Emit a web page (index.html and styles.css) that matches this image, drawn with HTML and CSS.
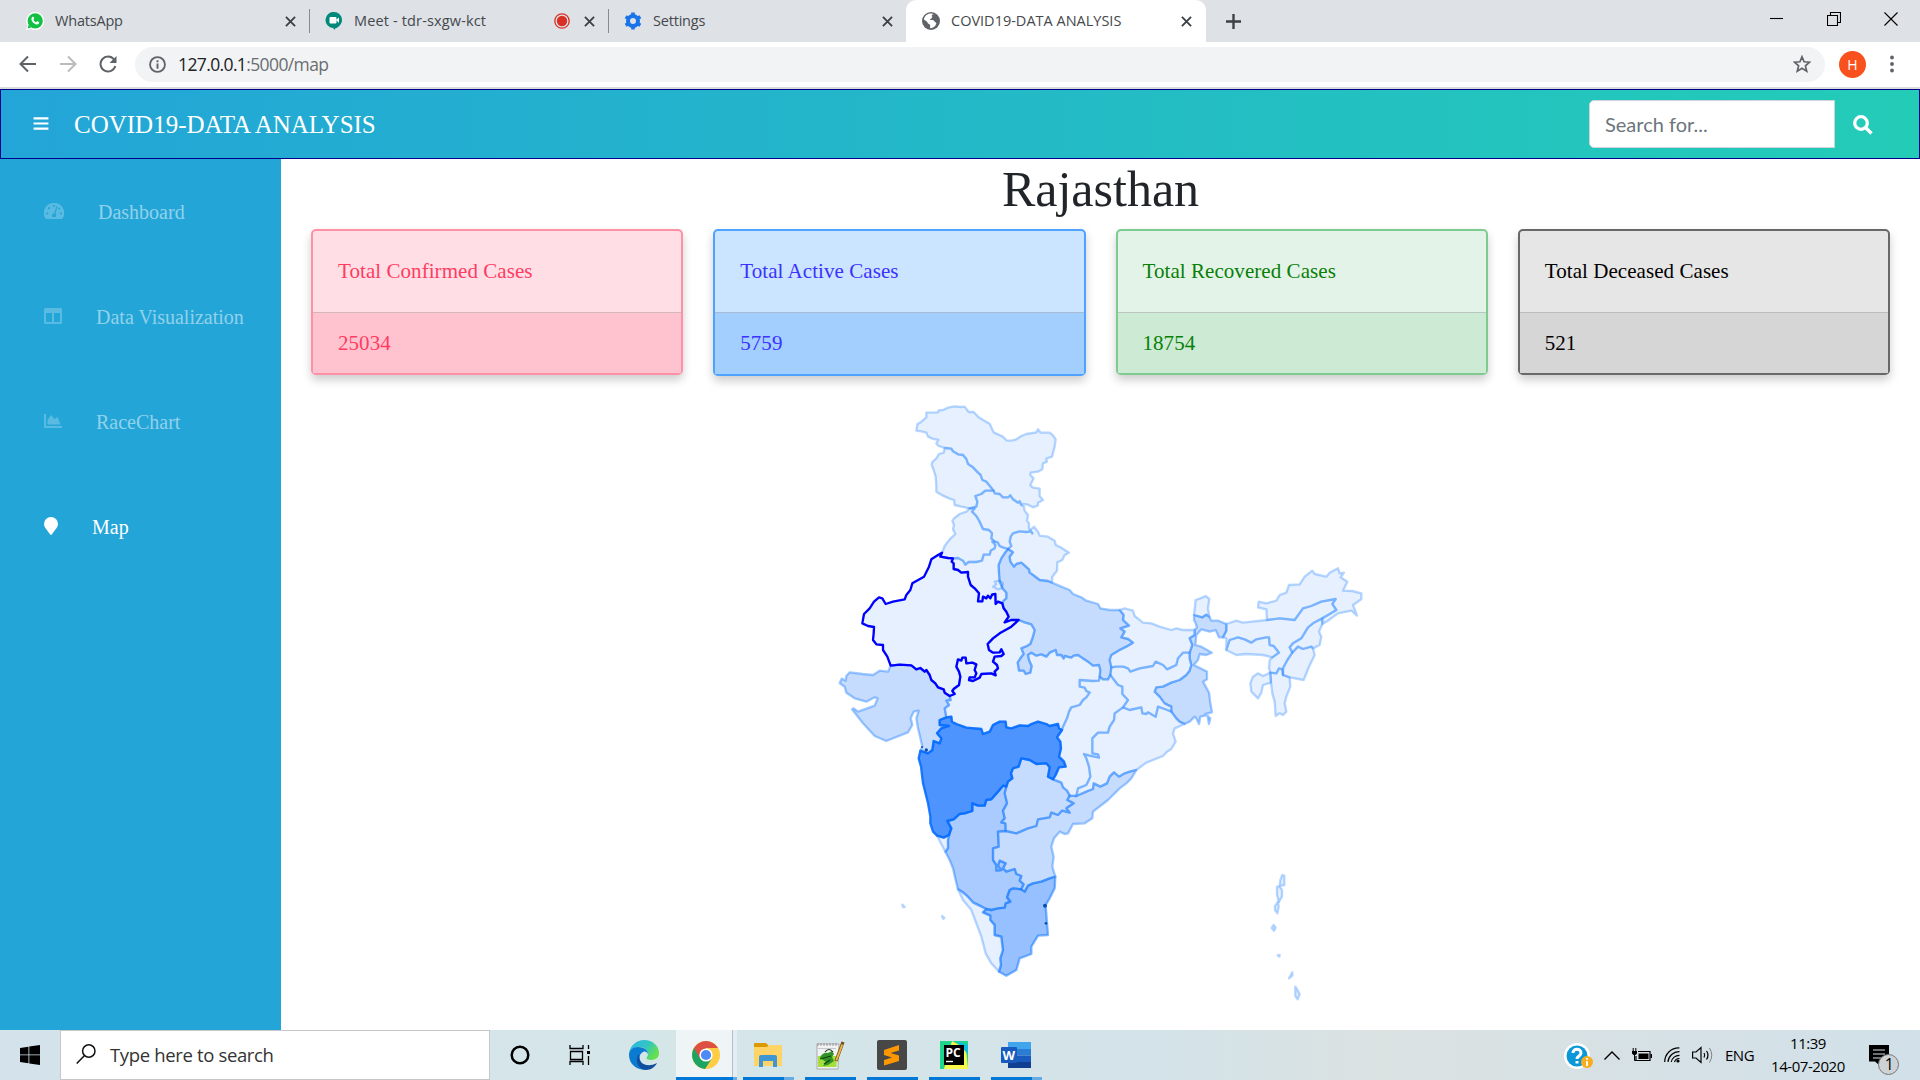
FILE: index.html
```html
<!DOCTYPE html>
<html lang="en">
<head>
<meta charset="utf-8">
<title>COVID19-DATA ANALYSIS</title>
<link rel="stylesheet" href="styles.css">
</head>
<body>
<div class="tabs">
  <div class="tab tab-first">
    <svg class="fav" viewBox="0 0 18 18"><path d="M0 18l1.4-4.6A9 9 0 1 1 5 16.9z" fill="#fff"/><circle cx="9.2" cy="8.9" r="7.6" fill="#12c143"/><path d="M1.6 16.4l1-3.6 2.6 2.8z" fill="#12c143"/><path d="M6.4 4.8c.5-.3 1-.2 1.2.3l.6 1.4-.8 1.2c.7 1.4 1.5 2 2.8 2.6l1-1.1 1.9.9c.4 1.5-1 2.4-2.2 2.3C7.700 12 5.500 9 5.400 7.200c0-1 .4-1.900 1-2.400z" fill="#fff"/></svg>
    <span class="tab-title">WhatsApp</span>
    <svg class="x" viewBox="0 0 12 12"><path d="M1 1l10 10M11 1L1 11"/></svg>
  </div>
  <div class="tab tab-meet">
    <svg class="fav" viewBox="0 0 18 18"><path d="M9 0a8 8 0 0 1 8 8c0 4-3 7-7 8.600V18l-2-2A8 8 0 0 1 9 0z" fill="#00897b"/><rect x="4.500" y="5" width="7" height="6.500" rx="1" fill="#fff"/><path d="M11 8l3-2.500v5.500z" fill="#fff"/></svg>
    <span class="tab-title t-meet">Meet - tdr-sxgw-kct</span>
    <svg class="rec" viewBox="0 0 16 16"><circle cx="8" cy="8" r="7.200" fill="none" stroke="#d93025" stroke-width="1.300"/><circle cx="8" cy="8" r="5.200" fill="#d93025"/></svg>
    <svg class="x" viewBox="0 0 12 12"><path d="M1 1l10 10M11 1L1 11"/></svg>
  </div>
  <div class="tab tab-settings">
    <svg class="fav" viewBox="0 0 18 18"><circle cx="9" cy="9" r="5" fill="none" stroke="#1a73e8" stroke-width="4"/><path d="M9 .5v3M9 14.500v3M1.600 4.700l2.600 1.500M13.800 11.800l2.600 1.500M1.600 13.300l2.600-1.500M13.800 6.200l2.600-1.500" stroke="#1a73e8" stroke-width="3.600"/></svg>
    <span class="tab-title">Settings</span>
    <svg class="x" viewBox="0 0 12 12"><path d="M1 1l10 10M11 1L1 11"/></svg>
  </div>
  <div class="tab tab-active">
    <svg class="fav" viewBox="0 0 18 18"><circle cx="9" cy="9" r="9" fill="#5f6368"/><path d="M8 1.600c3 0 4 .6 4.600 1.400-.6 1.600-2.400 1.200-2.800 2.800-.3 1.200-1.600 1-2 2 1.300.6 3.800-.2 4.400 1.200.6 1.300 2 1.400 2.200 2.200-.7 3-3 4.800-6 5-1-1 .4-2-.4-3.400-.6-1-2.400-1-2.600-2.600C4.200 8.800 2.500 8.300 1.900 7.600 2.200 4.700 5 2 8 1.600z" fill="#fff"/><path d="M9.500 4l3.500 3 3-1-1.500-3L11 2z" fill="#5f6368"/></svg>
    <span class="tab-title t-covid">COVID19-DATA ANALYSIS</span>
    <svg class="x" viewBox="0 0 12 12"><path d="M1 1l10 10M11 1L1 11"/></svg>
  </div>
  <svg class="plus" viewBox="0 0 14 14"><path d="M7 0v14M0 7h14"/></svg>
  <div class="window-buttons">
    <svg viewBox="0 0 14 14"><path d="M0 6.500h13"/></svg>
    <svg viewBox="0 0 14 14"><path d="M.5 3.500h10v10H.5zM3.500 3V.500h10v10H11"/></svg>
    <svg viewBox="0 0 14 14"><path d="M.5 .5l13 13M13.500 .5l-13 13"/></svg>
  </div>
</div>
<div class="toolbar">
  <svg class="nav-icon" viewBox="0 0 18 18"><path d="M17 9H2M9 1.500L1.500 9 9 16.500"/></svg>
  <svg class="nav-icon dim" viewBox="0 0 18 18"><path d="M1 9h15M9 1.500L16.500 9 9 16.500"/></svg>
  <svg class="nav-icon" viewBox="0 0 18 18"><path d="M15 4.500A7.500 7.500 0 1 0 16.300 11"/><path d="M17.500 1v7h-7z" fill="#5f6368" stroke="none"/></svg>
  <div class="address">
    <svg class="info" viewBox="0 0 16 16"><circle cx="8" cy="8" r="7" fill="none" stroke="#5f6368" stroke-width="1.700"/><path d="M8 7v5M8 4v1.800" stroke="#5f6368" stroke-width="1.800"/></svg>
    <span class="url"><b>127.0.0.1</b>:5000/map</span>
    <svg class="star" viewBox="0 0 18 18"><path d="M9 1.800l2.100 5 5.400.4-4.100 3.600 1.300 5.300L9 13.200l-4.700 2.900 1.300-5.300-4.100-3.600 5.400-.4z"/></svg>
  </div>
  <span class="avatar">H</span>
  <svg class="dots" viewBox="0 0 4 18"><circle cx="2" cy="2.500" r="1.900"/><circle cx="2" cy="9" r="1.900"/><circle cx="2" cy="15.500" r="1.900"/></svg>
</div>
<header class="navbar">
  <svg class="burger" viewBox="0 0 16 14"><path d="M0 1.500h16M0 7h16M0 12.500h16"/></svg>
  <span class="brand">COVID19-DATA ANALYSIS</span>
  <div class="search-field">Search for...</div>
  <svg class="search-icon" viewBox="0 0 20 20"><circle cx="8" cy="8" r="6.300"/><path d="M12.500 12.500l6 6"/></svg>
</header>
<div class="page">
  <nav class="sidebar">
    <a class="item i-dash"><svg viewBox="0 0 20 16"><path d="M10 0a10 10 0 0 1 8.700 15.200c-.2.500-.6.800-1.200.8H2.500c-.6 0-1-.3-1.200-.8A10 10 0 0 1 10 0z"/><g fill="#23a5d8"><circle cx="10" cy="3" r="1.100"/><circle cx="5" cy="5.200" r="1.100"/><circle cx="3.200" cy="10.500" r="1.100"/><circle cx="16.800" cy="10.500" r="1.100"/><circle cx="15.300" cy="5.500" r="1.100"/><path d="M12.500 3l1 .4-2 7.400c1 1 .9 2.400.2 3.200H8.300c-1-1.500 0-3.500 2-3.800z"/></g></svg><span>Dashboard</span></a>
    <a class="item i-data"><svg viewBox="0 0 18 16"><path fill-rule="evenodd" d="M1.500 0h15Q18 0 18 1.500v13q0 1.500-1.500 1.500h-15Q0 16 0 14.500v-13Q0 0 1.500 0zM2 5v9h6V5zM10 5v9h6V5z"/></svg><span>Data Visualization</span></a>
    <a class="item i-race"><svg viewBox="0 0 18 14"><path d="M0 0h2v12h16v2H0zM3.500 10.500V6l3.500-5 3.500 4 3-2 3 7.500z"/></svg><span>RaceChart</span></a>
    <a class="item i-map"><svg viewBox="0 0 14 18"><path d="M7 0a7 7 0 0 1 7 7c0 3-2 4.500-6.200 10.600q-.8.800-1.600 0C2 11.500 0 10 0 7a7 7 0 0 1 7-7z"/></svg><span>Map</span></a>
  </nav>
  <main>
    <h1>Rajasthan</h1>
    <div class="cards">
      <div class="card red"><div class="card-head">Total Confirmed Cases</div><div class="card-foot">25034</div></div>
      <div class="card blue"><div class="card-head">Total Active Cases</div><div class="card-foot">5759</div></div>
      <div class="card green"><div class="card-head">Total Recovered Cases</div><div class="card-foot">18754</div></div>
      <div class="card gray"><div class="card-head">Total Deceased Cases</div><div class="card-foot">521</div></div>
    </div>
    <svg class="map" id="map" viewBox="43 0 1602 1890"></svg>
  </main>
</div>
<footer class="taskbar">
  <svg class="start" viewBox="0 0 20 20"><path d="M0 3l8.500-1.300v7.800H0zM9.300 1.500L20 0v9.500H9.300zM0 10.300h8.500v7.900L0 17zM9.300 10.300H20V20L9.300 18.400z"/></svg>
  <div class="win-search">
    <svg viewBox="0 0 20 20"><circle cx="12.800" cy="7" r="6.200"/><path d="M8.300 11.800L.7 19.500"/></svg>
    <span>Type here to search</span>
  </div>
  <div class="slot s-cortana"><svg width="20" height="20" viewBox="0 0 20 20"><circle cx="10" cy="10" r="8.300" fill="none" stroke="#000" stroke-width="2.500"/></svg></div>
  <div class="slot s-task"><svg width="22" height="20" viewBox="0 0 22 20"><path d="M1 0v3.500h13V0M1.500 6.500h12v8h-12zM1 20v-3.500h13V20M19.500 0v4M19.500 11v9" fill="none" stroke="#000" stroke-width="1.300"/><path d="M18 6h3v3h-3z"/></svg></div>
  <div class="slot s-edge"><svg width="30" height="30" viewBox="0 0 30 30"><defs><linearGradient id="eg" x1="0" y1="0" x2="1" y2=".5"><stop offset="0" stop-color="#2fb4e8"/><stop offset=".6" stop-color="#32c6c2"/><stop offset="1" stop-color="#66e04c"/></linearGradient></defs><path d="M0 14C1 5 8 0 15 0c9 0 15 6 15 13 0 5-4 7-8 7-3 0-4.500-1-4.500-2 0-1 1.500-1.500 1.500-4C19 10 15 7 11 7 5 7 1 10 0 14z" fill="url(#eg)"/><path d="M0 15c0-5 4-8 9-8 6 0 10 3 10 7-1-2-3-3-5-2-4 2-5 8 0 13 2 2 4 3 7 3-9 5-21-2-21-13z" fill="#0b7ad1"/><path d="M10 16c0 8 8 12 18 7-3 6-9 8-14 6.500C8 27 6 19 10 14z" fill="#104f9e"/></svg></div>
  <div class="slot s-chrome"><svg width="28" height="28" viewBox="0 0 28 28"><circle cx="14" cy="14" r="14" fill="#ffcd45"/><path d="M14 14L1.900 7A14 14 0 0 0 13 28l6.500-10z" fill="#1da462"/><path d="M14 14l-6 3.500L1.900 7a14 14 0 0 1 24.200 0H14z" fill="#dd5144"/><circle cx="14" cy="14" r="6.600" fill="#fff"/><circle cx="14" cy="14" r="5.100" fill="#4c8bf5"/></svg></div>
  <div class="slot run tail s-folder"><svg width="28" height="24" viewBox="0 0 28 24"><path d="M0 1q0-1 1-1h11l2 2v4H0z" fill="#dc9a00"/><path d="M0 4h13l2-2h12q1 0 1 1v20H0z" fill="#ffd467"/><path d="M5 24V14q0-2 2-2h14q2 0 2 2v10h-4v-6H9v6z" fill="#3f96d4"/></svg></div>
  <div class="slot run"><svg width="30" height="30" viewBox="0 0 30 30"><path d="M2 4h22l-1 25H2z" fill="#f2f2f2" stroke="#999" stroke-width=".8"/><path d="M3 3v3M6 3v3M9 3v3M12 3v3M15 3v3M18 3v3M21 3v3" stroke="#888" stroke-width=".8"/><path d="M3 8.500h18" stroke="#aab" stroke-width=".6"/><path d="M3 16h19l-.5 11H3z" fill="#a4df3c"/><path d="M5 18c1-4 5-6 8-5l4-2 2 3-2 3 2 4-6 4-5 1 3-4z" fill="#329326"/><path d="M5 19l11-3M9 24l6-4M10 12q4-5 8 0" stroke="#173f12" stroke-width="1.200" fill="none"/><path d="M21 21l7-19" stroke="#744819" stroke-width="3.200"/><path d="M21.300 20.500l6-16" stroke="#e6b542" stroke-width="2"/></svg></div>
  <div class="slot run"><svg width="30" height="30" viewBox="0 0 30 30"><rect width="30" height="30" rx="2" fill="#474747"/><path d="M7 10l15-5v5.500L13.500 13l8.500 2.500V21L7 25.500V20l8-2.500L7 15z" fill="#ff9800"/></svg></div>
  <div class="slot run"><svg width="28" height="28" viewBox="0 0 28 28"><path d="M0 0h28v28H0z" fill="#1fd68c"/><path d="M12 0l14 8 2 20H4z" fill="#fcf84a"/><path d="M17 0l11 4v10l-6-8z" fill="#11bfdf"/><rect x="4" y="4" width="20" height="20"/><path d="M6 20.500h7" stroke="#fff" stroke-width="1.400"/><text class="pc" x="5.500" y="15.500">PC</text></svg></div>
  <div class="slot run tail"><svg width="30" height="28" viewBox="0 0 30 28"><path d="M7 1h23v7H7z" fill="#41a5ee"/><path d="M7 8h23v6.500H7z" fill="#2b7cd3"/><path d="M7 14.500h23V21H7z" fill="#185abd"/><path d="M7 21h23v6H7z" fill="#103f91"/><rect y="6" width="16" height="16" rx="1" fill="#185abd"/><text class="wd" x="1.500" y="18.500">W</text></svg></div>
  <div class="tray">
    <svg class="help" viewBox="0 0 30 28"><circle cx="13" cy="13" r="13" fill="#fff"/><circle cx="13" cy="13" r="10.500" fill="#0a98d8"/><path d="M9 10c0-5 8-5 8 0 0 3-4 3-4 6M13 18v2.500" stroke="#fff" stroke-width="3" fill="none"/><circle cx="23" cy="19" r="6" fill="#f8ad1f"/><path d="M23 18v5M23 15v1.700" stroke="#fff" stroke-width="1.800"/></svg>
    <svg class="caret" viewBox="0 0 16 9"><path d="M.5 8.500L8 1l7.500 7.500" fill="none" stroke="#000" stroke-width="1.400"/></svg>
    <svg class="battery" viewBox="0 0 20 14"><path d="M6 3.500h12v9H4V8" fill="none" stroke="#000" stroke-width="1.200"/><path d="M6.500 5.500h10v5.500h-10zM18.500 6H20v4h-1.500zM0 3h5v2.500L3.500 7h-2L0 5.500z"/><path d="M1.200 0v3M3.800 0v3M2.500 7v5.500H4" stroke="#000" fill="none"/></svg>
    <svg class="wifi" viewBox="0 0 16 16"><path d="M.7 15A14 14 0 0 1 15.500 1M4 15A11 11 0 0 1 15.500 4.700M7.300 15A8 8 0 0 1 15.500 8.300M10.500 15a5 5 0 0 1 5-3.500" fill="none" stroke="#000" stroke-width="1.200"/><circle cx="14" cy="14" r="1.600"/></svg>
    <svg class="volume" viewBox="0 0 21 18"><path d="M.6 6H4l5-4.500v15L4 12H.6zM12 7q1.500 2 0 4.500M14.500 5q3 4 0 8.500" fill="none" stroke="#000" stroke-width="1.200"/><path d="M17.500 2q4.500 7 0 14.500" fill="none" stroke="#7d8588"/></svg>
    <span class="lang">ENG</span>
    <div class="clock"><span>11:39</span><span class="date">14-07-2020</span></div>
    <svg class="action" viewBox="0 0 32 32"><path d="M0 0h20v16.500H10.500v4L6 16.500H0z"/><path d="M4 5h12M4 9h12M4 13h8" stroke="#d3e1e9" stroke-width="1.200"/><circle cx="19.500" cy="19.500" r="10" fill="#ced2d4" stroke="#777"/><text x="15.700" y="25">1</text></svg>
  </div>
</footer>
<script src="map.js"></script>
</body>
</html>
```
FILE: styles.css
```css
* { box-sizing: border-box; }
body { margin: 0; width: 1920px; height: 1080px; overflow: hidden; background: #fff; font-family: "Liberation Serif", "Times New Roman", serif; }
svg { flex: none; display: block; }

.tabs { display: flex; align-items: center; height: 42px; background: #dee1e6; font-family: "Open Sans", sans-serif; }
.tab { display: flex; align-items: center; height: 42px; padding: 0 14px 0 16px; color: #45494d; }
.tab-first { width: 310px; padding-left: 26px; }
.tab-meet { width: 299px; padding-left: 15px; }
.tab-settings { width: 297px; padding: 0 13px 0 15px; }
.tab-active { width: 300px; padding-left: 16px; background: #fff; border-radius: 10px 10px 0 0; }
.tab-first, .tab-meet { background: linear-gradient(#888c91, #888c91) right center / 1px 24px no-repeat; }
.fav { width: 18px; height: 18px; margin-right: 11px; }
.tab-title { flex: 1; margin-top: -2px; font-size: 14.5px; letter-spacing: -0.2px; white-space: nowrap; }
.t-meet { letter-spacing: 0.15px; }
.t-covid { letter-spacing: 0; }
.x { width: 11px; height: 11px; fill: none; stroke: #3c4043; stroke-width: 2; }
.rec { width: 16px; height: 16px; margin-right: 14px; }
.plus { width: 15px; height: 15px; margin-left: 20px; stroke: #3c4043; stroke-width: 2.2; }
.window-buttons { display: flex; gap: 43px; margin: -5px 22px 0 auto; }
.window-buttons svg { width: 14px; height: 14px; fill: none; stroke: #000; stroke-width: 1.1; }

.toolbar { display: flex; align-items: center; height: 47px; padding: 0 26px 1px 19px; border-bottom: 2px solid #dadbdd; background: #fff; }
.nav-icon { width: 18px; height: 18px; margin-right: 22px; fill: none; stroke: #5f6368; stroke-width: 2; }
.nav-icon.dim { stroke: #babcbe; }
.address { display: flex; align-items: center; width: 1690px; height: 35px; margin-left: -4px; padding: 0 14px; border-radius: 18px; background: #f1f3f4; font-family: "Open Sans", sans-serif; }
.info { width: 17px; height: 17px; margin-right: 12px; }
.url { flex: 1; font-size: 17.5px; letter-spacing: -0.62px; color: #6a6e72; }
.url b { font-weight: 400; color: #202124; }
.star { width: 18px; height: 18px; fill: none; stroke: #5f6368; stroke-width: 1.7; }
.avatar { width: 27px; height: 27px; margin-left: 14px; border-radius: 50%; background: #f9511d; color: #fff; font: 14px/27px "Open Sans", sans-serif; text-align: center; }
.dots { width: 4px; height: 18px; margin-left: auto; fill: #5f6368; }

.navbar { display: flex; align-items: center; height: 70px; padding: 0 46px 0 32px; border: 1px solid #00008b; background: linear-gradient(90deg, #23a5d8, #23ccb7); color: #fff; }
.burger { width: 16px; height: 13px; margin: -1px 25px 0 0; stroke: #fff; stroke-width: 2.4; }
.brand { margin-top: 2px; font-size: 25px; line-height: 30px; }
.search-field { width: 246px; height: 48px; margin-left: auto; padding: 0 15px; border: 1px solid #ced4da; border-radius: 5px 0 0 5px; background: #fff; color: #6c757d; font: 20px/46px Lato, sans-serif; }
.search-icon { width: 20px; height: 20px; margin: 2px 0 0 18px; fill: none; stroke: #fff; stroke-width: 3.3; }

.page { display: flex; height: 871px; }
.sidebar { width: 281px; background: #23a5d8; }
.item { display: flex; align-items: center; height: 105px; padding-left: 44px; color: rgba(255,255,255,.5); font-size: 20px; }
.item svg { fill: rgba(255,255,255,.25); margin-top: -2px; }
.item span { margin-top: 2px; }
.i-dash svg { width: 20px; height: 16px; margin-right: 34px; }
.i-data svg { width: 18px; height: 16px; margin-right: 34px; }
.i-race svg { width: 18px; height: 14px; margin-right: 34px; }
.i-map svg { width: 14px; height: 18px; margin-right: 34px; fill: #fff; }
.i-map { color: #fff; }
main { flex: 1; display: flex; flex-direction: column; align-items: center; }
h1 { margin: 0 0 10px; color: #212529; font-size: 50px; font-weight: 400; line-height: 60px; }
.cards { display: flex; gap: 30px; width: 1579px; height: 146px; }
.card { flex: 1; border: 2px solid; border-radius: 5px; font-size: 21px; letter-spacing: .06px; box-shadow: 0 5px 10px rgba(0,0,0,.2); }
.card-head { height: 82px; padding: 0 25px; line-height: 80px; border-bottom: 1px solid rgba(0,0,0,.18); }
.card-foot { height: 60px; padding: 0 25px; line-height: 60px; }
.red { border-color: #ff91a6; background: #ffdfe5; color: #ff3b62; }
.red .card-foot { background: #ffc3cf; }
.blue { border-color: #4da3ff; background: #cbe4ff; color: #3b32ff; height: 147px; }
.blue .card-foot { background: #a3cfff; height: 61px; }
.green { border-color: #7ecb90; background: #e4f3e8; color: #078007; }
.green .card-foot { background: #cdead4; }
.gray { border-color: #68686a; background: #e6e6e6; color: #000; }
.gray .card-foot { background: #d6d6d6; }
.map { width: 534px; height: 630px; margin-top: 15px; }
.border { fill: none; stroke-width: 7; stroke-linejoin: round; }
.fill.f1, .fill.selected { fill: #e6f0ff; }
.fill.f2 { fill: #c6dcff; }
.fill.f3 { fill: #a9cbff; }
.fill.f4 { fill: #96c0ff; }
.fill.f5 { fill: #4d94ff; }
.border.f1 { stroke: rgba(0,110,255,.28); }
.border.f2 { stroke: rgba(0,110,255,.36); }
.border.f3 { stroke: rgba(0,110,255,.4); }
.border.f4 { stroke: rgba(0,110,255,.48); }
.border.f5 { stroke: rgba(0,105,255,.85); }
.border.selected { stroke: #00f; }
.port { fill: #0a4db0; }

.taskbar { display: flex; height: 50px; background: linear-gradient(90deg, #d4e3eb, #d5e6e9 35%, #d3e3e9 60%, #dbe2e2 72%, #d1e0e9); }
.start { width: 20px; height: 20px; margin: 15px 20px; }
.win-search { display: flex; align-items: center; gap: 14px; width: 430px; height: 50px; padding: 0 0 2px 15px; border: 1px solid #c5c8c9; background: #fff; color: #333; font: 18.5px "Open Sans", sans-serif; letter-spacing: -.35px; }
.win-search svg { width: 20px; height: 20px; fill: none; stroke: #111; stroke-width: 1.5; }
.slot { display: flex; align-items: center; justify-content: center; width: 51px; height: 50px; margin-right: 11px; padding-right: 2px; }
.s-cortana { width: 60px; margin: 0; padding: 0; }
.s-task { width: 60px; margin: 0; padding: 0; }
.s-edge { width: 66px; padding: 0 0 0 2px; margin: 0; }
.s-chrome { width: 61px; margin-right: 6px; padding-right: 2px; background: linear-gradient(90deg, #0078d7 93%, #66abe3 93%) bottom / 100% 3px no-repeat, linear-gradient(90deg, #eff4f7 92%, #afc2cb 92%, #afc2cb 94%, #e4edf1 94%); }
.run { background: linear-gradient(#0078d7, #0078d7) bottom / 100% 3px no-repeat; }
.run.tail { background-image: linear-gradient(90deg, #0078d7 80%, #66abe3 80%); }
.pc { fill: #fff; font: bold 12px "Open Sans", sans-serif; }
.wd { fill: #fff; font: bold 13px "Open Sans", sans-serif; }
.tray { display: flex; align-items: center; margin-left: auto; padding-right: 12px; height: 50px; width: 356px; font-family: "Open Sans", sans-serif; }
.tray svg { margin-right: 12px; }
.tray .help { width: 30px; height: 28px; margin-top: 3px; }
.tray .caret { width: 16px; height: 9px; margin-left: -2px; }
.battery { width: 20px; height: 14px; }
.wifi { width: 16px; height: 16px; }
.volume { width: 21px; height: 18px; }
.lang { font-size: 15px; letter-spacing: -.5px; width: 30px; }
.clock { display: flex; flex-direction: column; width: 90px; margin: -1px 0 0 8px; text-align: center; font-size: 15px; line-height: 23px; letter-spacing: -.45px; }
.date { white-space: nowrap; }
.tray .action { width: 32px; height: 32px; margin: 12px 0 0 16px; }
.action text { font: 16px "Open Sans", sans-serif; }
```
FILE: map.js
```js
// Borders of the states; neighbours share the same line.
const borders = {
ladOut: "375,174 355,167 350,160 356,150 338,146 325,140 320,128 305,124 290,122 293,103 305,95 320,82 320,68 355,67 357,61 370,60 385,53 405,49 425,51 435,50 447,66 462,66 475,80 490,90 510,101 522,127 535,133 550,140 560,151 575,152 590,148 605,138 620,132 650,127 655,118 663,128 690,128 700,136 708,148 705,170 697,200 680,206 682,215 670,220 668,238 655,245 633,248 632,255 642,265 632,285 638,292 660,296 660,318 670,330 655,338 655,346 640,352 625,344 610,342 605,345",
ladJk: "375,174 395,176 400,184 415,193 430,195 440,207 445,222 460,232 475,248 483,255 488,270 500,275 510,287 522,302",
ladHp: "522,302 525,310 540,312 550,322 565,322 572,316 580,328 595,338 600,334 605,345",
jkOut: "375,174 372,188 358,192 350,205 338,216 336,225 342,240 348,260 350,290 350,305 370,317 390,326 403,330 405,345 425,350 450,355",
jkHp: "450,355 470,350 473,335 467,318 485,312 497,302 522,302",
hpOut: "605,345 613,350 615,362 625,375 622,392 628,400 628,415 638,430",
hpUk: "638,430 634,424 620,426 600,424 580,430 573,440 570,455 575,468 565,477",
hpHar: "565,477 550,472 540,468 534,457 525,455",
hpPun: "525,455 515,445 517,430 508,420 490,417 480,395 470,378 457,365 465,355 450,355",
punOut: "450,355 440,365 420,372 403,385 398,393 403,405 400,418 407,432 390,448 375,468 367,488",
punRaj: "367,488 362,500 385,504 400,505",
punHar: "400,505 415,504 430,512 437,524 447,516 470,516 487,512 492,494 510,494 513,482 525,475 527,465 518,455 525,455",
rajHar: "400,505 396,515 402,520 402,537 415,540 425,548 445,546 445,560 453,585 465,595 478,610 475,634 488,634 490,620 500,625 505,617 512,625 518,613 527,612 528,642 535,635 548,640",
harUp: "548,640 552,632 560,625 560,608 550,597 540,575 538,550 537,525 545,505 555,490 565,477",
rajUp: "548,640 552,655 560,665 567,680 555,697 575,690 597,690",
rajMp: "597,690 575,710 540,730 520,745 504,762 508,780 520,788 540,787 545,778 552,792 545,798 525,800 520,815 532,825 535,835 525,845 528,856 515,850 485,852 480,863 460,873 448,870 450,862 465,862 470,850 465,840 470,823 458,818 440,820 438,803 428,803 425,812 415,808 410,830 418,845 422,860 418,885 402,897 398,903 405,912 390,918",
rajGuj: "390,918 375,908 372,898 355,892 347,880 335,870 330,855 320,840 315,845 302,834 290,838 275,826 240,824 213,827",
rajOut: "213,827 203,800 190,780 190,765 170,763 160,750 162,730 163,711 145,708 128,700 133,672 150,655 163,635 178,622 188,625 198,642 220,635 255,628 260,615 272,600 278,580 313,560 328,530 335,508 355,495 367,488",
ukOut: "638,430 632,420 643,410 655,425 660,437 685,440 705,452 708,465 725,473 748,488 735,495 728,510 713,517 712,542 698,560 697,578",
ukUp: "697,578 685,573 660,570 640,555 630,548 628,538 605,518 590,522 583,530 572,515 570,500 580,487 565,477",
upOut: "697,578 725,590 750,600 760,612 785,622 800,632 835,642 842,655 870,660 900,660",
upBih: "900,660 912,675 910,690 928,707 902,715 915,725 905,742 925,747 940,758 920,770 900,780 875,795 870,810 875,832",
upJh: "875,832 872,855",
upCg: "872,855 865,868 850,868 840,860",
upMp: "840,860 842,840 838,825 820,827 805,815 785,802 775,795 762,797 755,803 735,798 732,806 725,795 712,795 708,780 690,788 680,800 665,793 650,797 635,788 625,795 628,810 636,828 632,848 618,852 612,842 598,842 594,818 602,805 612,792 605,775 622,768 632,762 640,740 645,720 635,703 615,697 597,690",
mpCg: "840,860 838,872 820,873 780,870 780,890 795,893 800,903 810,908 800,922 790,930 780,945 755,952 748,965 742,985 730,1010 727,1020",
mpMh: "727,1020 718,1015 715,1002 690,1008 680,1002 655,995 635,1002 625,1008 600,1006 575,1015 560,1012 558,995 540,995 520,1005 510,1025 490,1032 485,1017 440,1013 410,1002 397,995 395,980 380,982",
mpGuj: "380,982 375,955 388,945 380,932 393,930 390,918",
gujMh: "380,982 360,990 360,1005 388,1008 365,1015 352,1030 365,1045 360,1060 342,1053 338,1080 325,1090 302,1082",
gujOut: "302,1082 308,1070 300,1035 295,1015 290,985 297,962 282,965 273,985 278,1005 265,1027 200,1053 165,1038 130,1000 97,958 102,955 115,965 165,947 174,925 165,922 140,935 105,925 80,908 75,890 60,880 66,866 78,872 80,858 90,847 130,852 160,855 180,842 205,845 213,827",
mhOut: "302,1082 297,1105 304,1130 310,1180 325,1240 332,1280 332,1300 340,1325 352,1337",
mhGoa: "352,1337 372,1343 388,1335",
mhKar: "388,1335 395,1315 383,1293 402,1288 420,1272 435,1270 458,1263 458,1240 475,1247 495,1247 500,1230 515,1228 535,1205 550,1187 560,1190",
mhTel: "560,1190 565,1175 578,1165 574,1150 580,1135 597,1130 605,1105 630,1110 650,1122 680,1120 690,1132 685,1160 700,1168",
mhCg: "700,1168 708,1155 718,1132 738,1130 733,1115 718,1100 724,1075 722,1055 712,1042 727,1020",
goaOut: "352,1337 377,1385",
goaKar: "377,1385 385,1375 385,1350 388,1335",
karOut: "377,1385 390,1410 400,1435 408,1470 415,1498",
karKer: "415,1498 430,1507 445,1520 460,1537 480,1547 500,1557",
karTn: "500,1557 515,1560 535,1555 555,1553 558,1540 572,1535 562,1522 570,1500 580,1495 605,1498",
karAp: "605,1498 612,1483 600,1472 605,1458 590,1452 585,1437 560,1445 550,1435 558,1420 540,1412 535,1428 545,1440 530,1442 530,1425 520,1410 520,1375 537,1370 535,1325 558,1323",
karTel: "558,1323 557,1300 545,1297 555,1285 550,1262 562,1240 555,1210 560,1190",
telAp: "558,1323 590,1330 625,1315 650,1308 655,1288 690,1282 695,1268 715,1275 727,1262 750,1268 740,1255 762,1240 743,1230 750,1217",
telCg: "700,1168 725,1178 730,1192 742,1202 750,1217",
apCg: "750,1217 770,1218",
cgOd: "770,1218 775,1195 800,1185 812,1160 808,1130 800,1105 793,1092 810,1097 838,1103 835,1093 818,1090 818,1045 835,1028 865,1028 870,1010 883,990 885,970 910,952",
cgJh: "910,952 925,930 908,912 908,890 895,885 872,855",
apOd: "770,1218 800,1205 820,1197 822,1180 842,1190 862,1180 870,1160 883,1147 898,1160 915,1150 930,1145 950,1140",
odOut: "950,1140 980,1118 1030,1098 1042,1085 1055,1077 1068,1055 1060,1030 1065,1015 1095,1002",
odJh: "910,952 930,960 965,952 968,970 980,972 985,967 1008,980 1015,950 1035,957 1055,965",
odWb: "1055,965 1070,985 1080,995 1095,1002",
jhWb: "1055,965 1055,950 1035,940 1020,920 1005,905 1010,892 1030,890 1055,878 1080,870 1100,855 1110,842 1115,825 1110,805 1110,788",
jhBih: "1110,788 1090,788 1075,805 1070,825 1042,838 1030,825 1008,815 1000,828 960,835 932,845 925,835 910,830 890,830 875,832",
bihWb: "1110,788 1118,765 1110,745 1125,735 1125,720",
bihOut: "900,660 915,655 940,662 945,678 970,698 995,700 1020,710 1055,720 1070,715 1090,720 1125,720",
wbNep: "1125,720 1132,712 1128,700 1123,690 1123,675",
sikOut: "1123,675 1128,630 1142,625 1158,618 1169,627 1165,655 1169,680",
sikWb: "1169,680 1160,674 1148,682 1123,675",
wbBhu: "1169,680 1175,692 1195,692 1220,702",
wbAs: "1220,702 1220,722 1210,742",
wbOut: "1210,742 1198,742 1188,720 1170,725 1145,718 1130,735 1127,765 1145,770 1177,788 1160,795 1140,792 1135,810 1122,825 1162,845 1162,868 1150,875 1168,908 1172,940 1177,967 1157,972 1172,985 1168,1002 1163,975 1142,980 1138,1002 1130,985 1125,980 1110,995 1095,1002",
asBhu: "1220,702 1250,692 1270,698 1342,690",
arOut: "1342,690 1340,658 1315,652 1317,635 1340,640 1370,632 1380,615 1400,608 1408,585 1440,583 1455,560 1478,542 1485,552 1520,560 1530,548 1555,535 1560,550 1573,548 1563,562 1583,575 1570,602 1598,603 1625,610 1625,628 1600,645 1612,677 1595,662 1555,670 1525,692 1508,702",
arAs: "1342,690 1380,685 1425,690 1450,655 1475,648 1505,635 1548,627 1538,642 1550,660 1525,675 1508,685",
arNag: "1508,685 1508,702",
asNag: "1508,685 1480,700 1465,712 1445,745 1420,760 1410,772 1418,788",
nagOut: "1508,702 1498,725 1505,740 1500,765 1480,775",
nagMan: "1418,788 1435,770 1450,777 1475,770 1480,775",
asMan: "1418,788 1403,810 1390,835 1390,855",
manOut: "1480,775 1485,795 1468,830 1452,870 1410,862",
manMiz: "1410,862 1390,855",
asMiz: "1390,855 1388,838 1378,835 1370,850 1352,848",
mizOut: "1410,862 1412,890 1400,920 1395,940 1400,965 1390,975 1380,970 1368,978 1365,935 1358,910 1354,878",
mizTri: "1354,878 1352,848",
triOut: "1352,848 1330,858 1315,850 1300,860 1292,880 1295,905 1315,925 1325,908 1330,885 1354,878",
asBan: "1352,848 1348,835 1350,810 1358,802",
megOut: "1358,802 1330,795 1280,792 1250,795 1220,780",
megAs: "1220,780 1225,765 1230,750 1255,742 1275,748 1295,758 1310,748 1340,742 1348,742 1350,765 1362,768 1378,788 1358,802",
asBan2: "1210,742 1220,745 1220,780",
apOut: "950,1140 935,1165 920,1180 900,1195 865,1230 820,1265 818,1285 795,1300 760,1302 745,1330 735,1332 720,1325 703,1345 695,1370 702,1400 698,1430 707,1460",
tnAp: "707,1460 690,1465 665,1475 640,1480 625,1487 615,1505 605,1498",
tnOut: "707,1460 705,1495 690,1525 678,1545 682,1600 685,1635 655,1637 635,1670 635,1692 600,1705 590,1740 560,1757 538,1745",
tnKer: "538,1745 544,1725 542,1705 550,1680 545,1640 525,1635 525,1605 512,1590 512,1577 490,1567 500,1557",
kerOut: "415,1498 430,1530 455,1560 470,1600 485,1640 498,1690 515,1720 538,1745",
delhi: "550,580 540,572 525,575 530,583 520,590 535,598 545,595",
andaman1: "1388,1455 1394,1457 1394,1485 1380,1487 1382,1470",
andaman2: "1380,1490 1387,1500 1387,1520 1378,1535 1372,1515 1372,1490",
andaman3: "1375,1535 1377,1550 1373,1570 1367,1562 1365,1550",
andaman4: "1362,1605 1368,1613 1363,1622 1356,1614",
andaman5: "1374,1696 1380,1695 1379,1700",
andaman6: "1418,1747 1418,1757 1408,1765",
andaman7: "1427,1790 1432,1798 1440,1812 1434,1828 1427,1818",
lak1: "248,1544 255,1551 250,1551",
lak2: "367,1578 374,1584 371,1586"
};
const states = [
["f1","ladOut ladHp ladJk"],
["f1","jkOut jkHp ladJk"],
["f1","ladHp hpOut hpUk hpHar hpPun jkHp"],
["f1","punOut punRaj punHar hpPun"],
["f1","punHar hpHar harUp rajHar"],
["f1","ukOut ukUp hpUk"],
["f1","rajMp mpGuj mpMh mpCg upMp"],
["f1","bihOut bihWb jhBih upBih"],
["f1","jhBih upJh cgJh odJh jhWb"],
["f1","mpCg mhCg telCg apCg cgOd cgJh upCg"],
["f1","cgOd odJh odWb odOut apOd"],
["f1","sikOut sikWb"],
["f1","asBhu arAs asNag asMan asMiz asBan megAs asBan2 wbAs"],
["f1","arOut arNag arAs"],
["f1","arNag nagOut nagMan asNag"],
["f1","nagMan manOut manMiz asMan"],
["f1","manMiz asMiz mizTri mizOut"],
["f1","triOut mizTri"],
["f1","megOut megAs"],
["f1","kerOut tnKer karKer"],
["f1","goaOut goaKar mhGoa"],
["f1","delhi"],["f1","andaman1"],["f1","andaman2"],["f1","andaman3"],["f1","andaman4"],["f1","andaman5"],["f1","andaman6"],["f1","andaman7"],["f1","lak1"],["f1","lak2"],
["f2","upOut upBih upJh upCg upMp rajUp harUp ukUp"],
["f2","gujOut rajGuj mpGuj gujMh"],
["f2","wbNep sikWb wbBhu wbAs wbOut odWb jhWb bihWb"],
["f2","telAp telCg mhTel karTel"],
["f2","apOut tnAp karAp telAp apCg apOd"],
["f3","karOut karKer karTn karAp karTel mhKar goaKar"],
["f4","tnOut tnKer karTn tnAp"],
["f5","mhOut mhGoa mhKar mhTel mhCg mpMh gujMh"],
["selected","punRaj rajHar rajUp rajMp rajGuj rajOut"]
];
const points = {};
for (const k in borders) points[k] = borders[k].split(" ").map(p => p.split(",").map(Number));
const gap = (a, b) => Math.hypot(a[0] - b[0], a[1] - b[1]);
const map = document.getElementById("map");
const add = (tag, attrs) => {
  const el = document.createElementNS("http://www.w3.org/2000/svg", tag);
  for (const k in attrs) el.setAttribute(k, attrs[k]);
  map.appendChild(el);
};
// Joins the borders of one state, turning each so that it starts where the last one ended.
function outline(names) {
  const parts = names.split(" ").map(n => points[n]);
  let line = parts.shift().slice();
  if (parts.length) {
    const near = p => Math.min(...parts.map(q => Math.min(gap(p, q[0]), gap(p, q[q.length - 1]))));
    if (near(line[line.length - 1]) > near(line[0])) line.reverse();
  }
  while (parts.length) {
    const end = line[line.length - 1];
    const dist = q => Math.min(gap(end, q[0]), gap(end, q[q.length - 1]));
    parts.sort((a, b) => dist(a) - dist(b));
    let next = parts.shift().slice();
    if (gap(end, next[0]) > gap(end, next[next.length - 1])) next.reverse();
    line = line.concat(next.slice(1));
  }
  return "M" + line.map(p => p.join(" ")).join("L") + "Z";
}
// All fills go below all borders, so a shared border shows twice as strong.
for (const layer of ["fill", "border"])
  for (const [cls, names] of states) add("path", { class: layer + " " + cls, d: outline(names) });
for (const [x, y, r] of [[320, 1080, 5], [307, 1071, 3], [676, 1547, 6], [679, 1600, 4]]) add("circle", { class: "port", cx: x, cy: y, r: r });
```
